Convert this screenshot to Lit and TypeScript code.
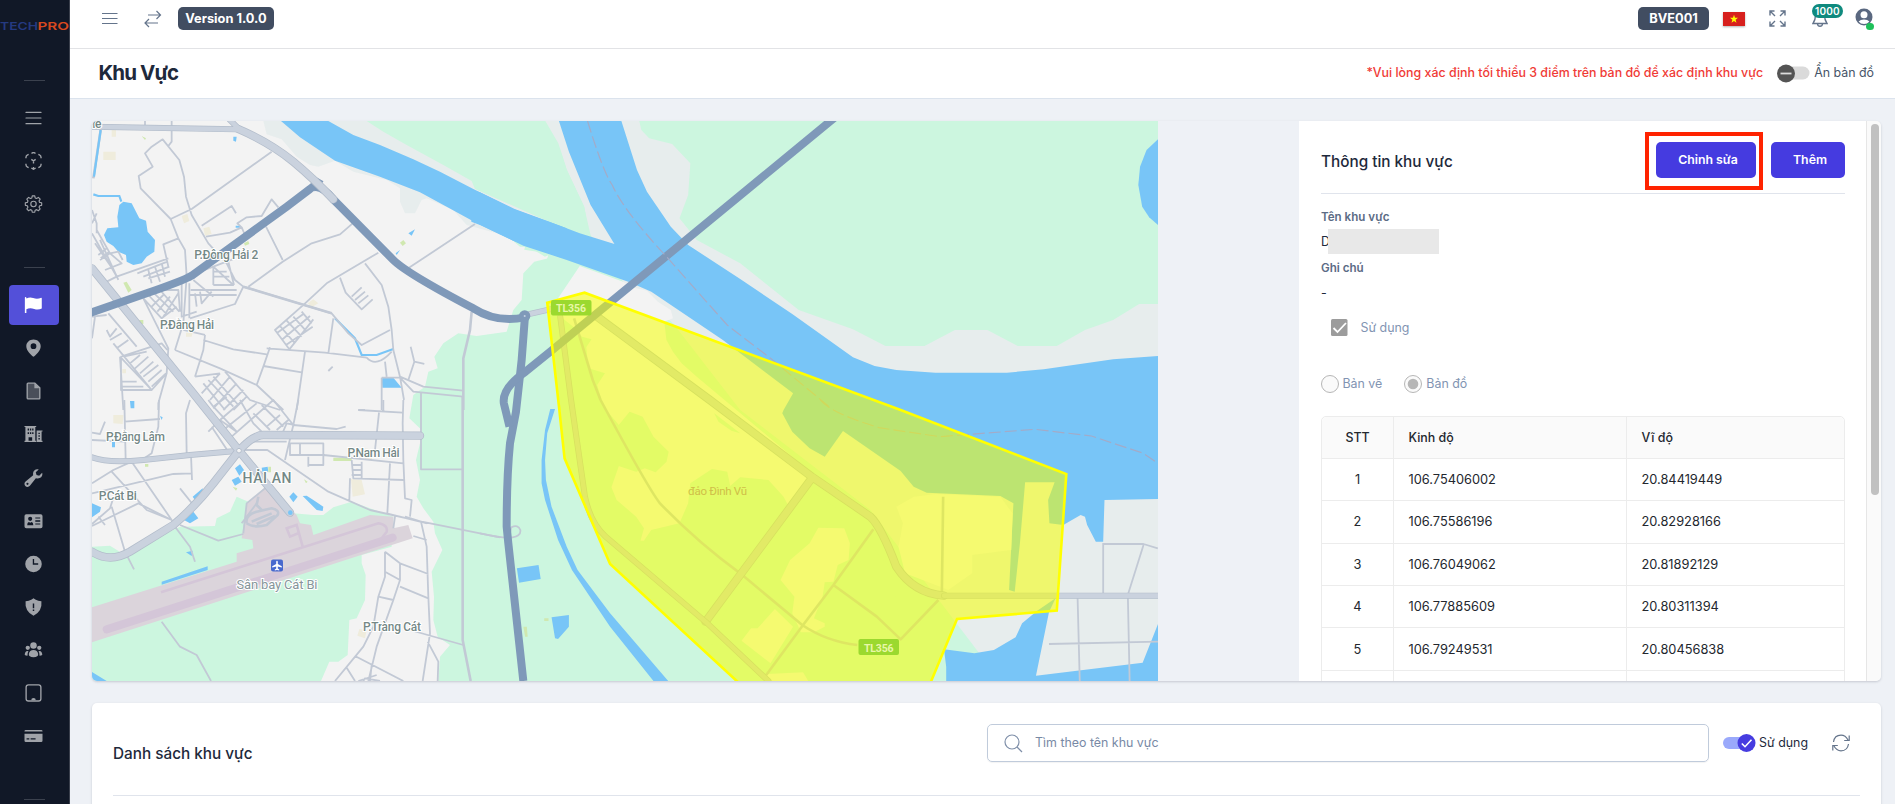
import { LitElement, html, svg, css } from "lit";
import { customElement } from "lit/decorators.js";

const points = [
  ["1", "106.75406002", "20.84419449"],
  ["2", "106.75586196", "20.82928166"],
  ["3", "106.76049062", "20.81892129"],
  ["4", "106.77885609", "20.80311394"],
  ["5", "106.79249531", "20.80456838"],
  ["", "", ""],
];

const line = (body: unknown, cls = "ico") =>
  html`<svg class=${cls} viewBox="0 0 24 24" fill="none" stroke="currentColor" stroke-width="1.6" stroke-linecap="round" stroke-linejoin="round">${body}</svg>`;
const solid = (body: unknown, box = "0 0 20 20") =>
  html`<svg class="ico" viewBox=${box} fill="currentColor">${body}</svg>`;

const menuLines = svg`<path d="M2 4.500h20M2 12h20M2 19.500h20"/>`;

const navTop = [
  line(menuLines),
  html`<svg class="ico" viewBox="0 0 20 20" fill="none" stroke="currentColor" stroke-width="1.500">
    <path d="M1.600 7V6Q1.600 4 3.400 3.200L4.600 2.600M15.400 2.600l1.200.6Q18.400 4 18.400 6v1M1.600 13v1Q1.600 16 3.400 16.800l1.200.6M15.400 17.400l1.200-.6Q18.400 16 18.400 14v-1M7.800 1.600Q10-.2 12.200 1.600M7.600 17.800L10 19.200l2.400-1.400M10 16.600v2.600M7.600 8.200L10 9.800l2.400-1.600M10 9.800v3"/></svg>`,
  html`<svg class="ico" viewBox="0 0 24 24" fill="none" stroke="currentColor" stroke-width="1.500" stroke-linejoin="round">
    <path d="M10.300 1.200h3.400l.5 2.700 2 .8 2.300-1.500 2.400 2.400-1.500 2.300.8 2 2.700.5v3.400l-2.700.5-.8 2 1.500 2.300-2.400 2.400-2.300-1.500-2 .8-.5 2.700h-3.400l-.5-2.700-2-.8-2.300 1.500-2.400-2.400 1.500-2.300-.8-2-2.700-.5v-3.400l2.700-.5.8-2L3.100 5.600l2.400-2.400 2.300 1.500 2-.8z"/><circle cx="12" cy="12" r="3.600"/></svg>`,
];

const navMain = [
  solid(svg`<path d="M1.200 1.200q.9 0 .9.900v.6Q6 .7 9.600 2.200 14 4 18.600 2q.6 0 .6.600v11.200q-3.800 2-8.400.6Q6 12.600 2.100 14.600V19H.4V2Q.4 1.200 1.200 1.200z"/>`),
  solid(svg`<path fill-rule="evenodd" d="M10 .5C5.600.500 2 3.700 2 8c0 5.200 5.800 10.200 8 11.700C12.200 18.200 18 13.200 18 8 18 3.700 14.400.500 10 .5zm0 10.700a3.200 3.200 0 110-6.400 3.200 3.200 0 010 6.400z"/>`),
  html`<svg class="ico" viewBox="0 0 20 20"><path d="M4 1.300h7.500L17 6.500V18q0 .8-.8.800H4q-1 0-1-1V2.300q0-1 1-1z" fill="#4a4f5a" stroke="currentColor" stroke-width="1.500"/><path d="M11 1v6h6z" fill="currentColor"/></svg>`,
  solid(svg`<path fill-rule="evenodd" d="M0 1h13v1.300h-1v15.200h1V19H0v-1.500h1V2.300H0zM3.500 4v2h1.500V4zM6 4v2h1.500V4zM8.500 4v2H10V4zM3.500 8v2h1.500V8zM6 8v2h1.500V8zM8.500 8v2H10V8zM4.500 13.500v4h4v-4zM13.500 6H20v1.300h-1v10.200h1V19h-6.500zM15.500 8.500v1.500H17V8.500zm0 3V13H17v-1.500zm0 3V16H17v-1.500z"/>`),
  solid(svg`<path fill-rule="evenodd" d="M19.600 4.300 16.300 7.600 13.400 6.700 12.500 3.700 15.800.500C12.800-.6 9.200 1.600 9.500 5.500L9.600 7 1.200 13.800C-.4 15.200-.4 17.400.9 18.800 2.300 20.300 4.700 20.200 6 18.700L12.600 10.400 14.300 10.500C18.300 10.800 20.700 7.400 19.600 4.300zM3.300 17.700a1.200 1.200 0 110-2.400 1.200 1.200 0 010 2.400z"/>`),
  solid(svg`<path fill-rule="evenodd" d="M2 2.500h16q2 0 2 2v11.500q0 2-2 2H2q-2 0-2-2V4.500q0-2 2-2zM6.300 5.300a2.300 2.300 0 100 4.600 2.300 2.300 0 000-4.600zM3 14.600h6.800Q9.800 11.500 8 11L6.400 12 4.800 11Q3 11.500 3 14.600zM12 6v1.300h5.500V6zm0 3.300v1.400h5.500V9.300zm0 3.400V14h5.500v-1.300z"/>`),
  solid(svg`<path fill-rule="evenodd" d="M10 .8a9.200 9.200 0 100 18.400A9.200 9.200 0 0010 .8zM9.200 4.500h1.500v4.800h4.500v1.500H9.200z"/>`),
  solid(svg`<path fill-rule="evenodd" d="M10 .4 12 1.800Q15 3.500 18.800 3.500 20 14.500 10 19.700 0 14.500 1.200 3.500 5 3.500 8 1.800zM9.200 6v5.300h1.600V6zm0 6.700v1.800h1.600v-1.800z"/>`),
  solid(svg`<circle cx="10" cy="5" r="3.600"/><circle cx="3.600" cy="7.600" r="2.400"/><circle cx="16.400" cy="7.600" r="2.400"/><path d="M4.800 14.500Q5.500 10 10 10t5.200 4.500Q15.500 18 10 18T4.800 14.500zM3.200 11Q.6 11.300.2 15.200 1 16.400 3.300 16.400 3 13.500 4.400 11.300zM16.800 11q2.600.3 3 4.200-.8 1.200-3.100 1.200.3-2.900-1.100-5.100z"/>`),
  html`<svg class="ico" viewBox="0 0 20 20"><rect x="1.800" y=".9" width="16.400" height="18" rx="2.600" fill="none" stroke="currentColor" stroke-width="1.500"/><path d="M7.500 18q0-2.500 2.500-2.500t2.500 2.500z" fill="currentColor"/></svg>`,
  solid(svg`<path d="M0 5V4.500q0-1.300 1.300-1.300h17.400q1.300 0 1.300 1.300V5z"/><path fill-rule="evenodd" d="M0 7.500h20v7.700q0 1.500-1.500 1.500h-17Q0 16.700 0 15.200zM2.300 12.500v1.300h3v-1.300zm4.500 0v1.300h5.500v-1.300z"/>`),
];

/* Map frames: W1/W2 cover the western half (3 units per pixel), E1/E2 the eastern half. */
const W1 = "translate(80 110) scale(.33333)";
const W2 = "translate(80 400) scale(.33333)";
const E1 = "translate(480 110) scale(.43367 .33333)";
const E2 = "translate(480 400) scale(.43367 .33333)";

const streetsW1 =
  "M195 33v12M275 33V95L265 108M272 327 182 235 176 198 218 170 195 130 215 110 248 88 298 150 312 200 318 260 335 315 385 400 440 460 465 510 490 530 590 560 755 610 805 670 845 705 930 660" +
  "M575 125 335 297 272 327 295 385 250 403 265 470M295 385 315 420 320 500 310 640 285 720M365 347 455 288 468 310M378 380 450 368 485 352 472 340 500 322 545 318 575 268 595 292M485 352 495 375" +
  "M558 350 608 450M505 530 608 455 695 400 780 373 818 340M1185 342 980 478M895 428 740 520 672 583M780 503 797 548 845 598 878 568M815 560 845 532M825 570 855 545M835 580 865 556M855 460 905 525 925 590 935 660 940 720 960 800 972 870" +
  "M672 583 585 660 628 718 700 628M600 648 645 700M620 632 665 680M640 620 680 665M665 605 695 640M590 670 670 612M605 690 690 618M618 705 698 650M760 625 745 730M370 690 460 718 560 733M375 675 370 720 345 800M285 720 420 775 530 825 610 900M310 660 375 675M570 712 550 770 530 825M560 715 735 728 860 743M675 725 650 900M550 768 665 787M860 743Q890 775 935 725M915 755 920 800M745 783 758 770M992 710 1003 755 1033 762M1003 755 985 810M905 803 905 900M960 800 1030 830 1150 842M905 803 960 803 1000 845 1150 860M1023 850V900" +
  "M36 300 50 340 50 370M36 370 110 500 80 515M45 400 100 480M60 390 115 510M50 360 90 430M60 450 90 430 125 460 75 480M36 340 50 310M55 435 80 415M62 445 88 425M90 430 115 425 128 450M110 500 265 445M172 490 262 455M190 500 268 470M205 505 270 485M205 480 215 520M225 470 240 515M245 460 255 500M190 565 245 625 290 590M205 555 262 615M220 548 280 605M240 540 298 605M215 590 250 555M232 605 270 560M250 620 295 550M245 540 295 540 300 605M120 740 215 840 260 790 265 715 190 565" +
  "M305 520V620L350 605M320 500 400 470 465 445M328 520V625M330 555H470M332 540H470M345 550 350 590M360 545 365 580 395 545M400 470 460 525M400 485H440M400 500H448M400 525H462M445 455 462 525M400 470V525M330 625 465 582 490 530M340 510 400 560M36 685 45 620M100 700 215 840M80 660 90 680 110 655M90 690 125 670M110 715 145 690M85 610 170 710M36 620 80 615M123 740V840H215M123 815H170M123 830H190M123 740 245 700 262 720M150 760 180 735M165 775 205 740M180 790 220 755M190 800 235 765M205 815 245 780M215 830 258 790M120 740 130 900M260 790 235 880 235 900M130 740 200 725M345 800 420 790M370 820 435 900M385 810 460 890M400 800 475 885M435 785 510 870 600 900M365 850 420 790M390 870 450 800M400 895 470 820M430 900 490 840M460 900 500 860M835 900H855";
const streetsW2 =
  "M36 98 60 102 75 65M36 120 135 125M133 0 137 180M133 65 240 57M237 0 235 80 215 160 185 180M330 0 318 40 320 160M333 165 336 240M36 250 100 210 155 185 275 360M95 215 200 330 275 360 175 310 36 378M36 280 280 222 335 220M95 320 135 455 162 508M36 372 90 325 98 300M55 350 75 375M300 265 340 315M385 0 400 20 470 95M400 20 440 -10M395 80 440 148M385 95 420 60 490 0M420 60 470 95M430 90 530 10M455 110 580 0 640 75M480 0 520 70 560 110 605 105 620 70 645 75M520 40 570 90M545 15 610 80M560 80 600 45M590 90 625 60M490 150H562L745 275 870 330 1025 365 1260 412M615 180 640 75 655 0M640 75 770 87 797 80M490 125H620M630 130H730V195H685V200M630 130V165H735M660 130V165M685 170V195M730 165 970 190M815 180 820 235 970 240M845 185V235M815 195H845M815 210H845M815 225H845M835 30 968 38M910 0V35M897 38 885 150M970 0 968 70 970 180 975 295 995 300 990 350M930 190 922 340M810 235 808 300M1023 0V208H1150M945 350 940 385M1023 365 1040 440 1045 590 1050 700 1028 843M920 340 1020 365M975 350 1040 370M1000 408 1040 420M915 455 960 490 1045 522M915 455 915 530 895 590 880 680 850 740 765 843M915 515 960 540 960 490M960 540 940 600 890 740 865 843M895 590 940 600M960 560 1045 595M825 768 970 843M800 803 825 843M990 690 1150 735M1043 725 1075 785 1073 843M835 843 890 825M850 843 855 835 900 843M875 795 870 843M245 665 300 740 350 765 393 843M285 380 330 440 345 485M300 375 415 422 490 402M530 310 485 370M555 265 500 310 490 400";
const streetsE = "M1435 432H1530L1563 445M1437 432V580M1530 435 1495 580M1378 595 1383 843M1494 595 1498 843M1312 732 1570 725M0 400Q50 415 75 412 95 408 93 390 88 372 72 382L70 395";

@customElement("area-map")
class AreaMap extends LitElement {
  static styles = css`
    :host { display: block; width: 1066px; height: 560px; }
    .map { display: block; width: 100%; height: 100%; }
    path, polyline { vector-effect: non-scaling-stroke; }
    .land { fill: #f3f3f3; }
    .marsh { fill: #e7eded; }
    .green { fill: #ccf6df; }
    .water { fill: #78c5f7; }
    .port { fill: #dbd4db; }
    .park { fill: #d0e8b0; }
    .block { fill: #efecdc; }
    .street { fill: none; stroke: #c2c9d5; stroke-width: 1.8; stroke-linejoin: round; }
    .lane { fill: none; stroke: #c2c9d5; stroke-width: 2.6; stroke-linejoin: round; }
    .casing { fill: none; stroke: #b3bdcb; stroke-width: 8.4; stroke-linecap: round; stroke-linejoin: round; }
    .road { fill: none; stroke: #cad2de; stroke-width: 6.8; stroke-linecap: round; stroke-linejoin: round; }
    .thin.casing { stroke-width: 6; }
    .thin.road { stroke-width: 4.6; }
    .highway { fill: none; stroke: #7f99b9; stroke-width: 8; stroke-linejoin: round; }
    .runway { fill: none; stroke: #d4c6d8; stroke-width: 8; stroke-linecap: round; }
    .taxi { fill: none; stroke: #d4c6d8; stroke-width: 2.6; }
    .creek { fill: none; stroke: #78c5f7; stroke-width: 2.2; }
    .ferry { fill: none; stroke: #a3abc8; stroke-width: 1.2; stroke-dasharray: 12 4; }
    .zone { fill: #f6ff00; fill-opacity: .54; stroke: #ffff00; stroke-width: 2.6; }
    text { font-family: Roboto, sans-serif; font-size: 12px; font-weight: 500; fill: #748886; stroke: #fff; stroke-width: 2px; paint-order: stroke; }
    .district { font-size: 14px; letter-spacing: 1px; }
    .poi { font-size: 13px; font-weight: 400; fill: #86959a; }
    .isle { fill: #d0bf48; stroke: none; font-weight: 400; font-size: 11.5px; }
    .tag { fill: #e9f7a8; stroke: none; font-size: 10.5px; font-weight: 700; }
  `;
  render() {
    return html`<svg class="map" viewBox="92 121 1066 560" preserveAspectRatio="none">
      <rect class="land" x="92" y="121" width="1066" height="560"/>
      <g transform=${E1}>
        <path class="green" d="M184 33H1570V1713H0V900Z"/>
        <path class="land" d="M-60 340 0 372 60 390 95 418 155 430 158 445 125 455 103 495 97 570 80 620 60 670 0 678-60 672Z"/>
        <path class="marsh" d="M100 20H365L372 60 390 85 443 102 485 160 480 255 460 325 500 390 600 460 735 600 860 658 935 708H1025L1095 660H1170L1240 708H1330L1395 660 1460 630 1520 582H1570V1713H1200L900 1200 600 900 445 640 330 515 255 375 240 290 200 180 180 100Z"/>
      </g>
      <g transform=${W1}>
        <path class="marsh" d="M550 33 560 73 605 88 650 140 690 165 715 170 765 152 820 185 920 210 960 235V275L975 310H1005L1025 270 1040 265 1120 300 1160 345 1250 370 1300 392 1440 442V33Z"/>
        <path class="green" d="M860 33 910 65 980 105 1090 165 1175 213 1185 237 1440 350 1532 410 1513 290 1461 180 1435 100 1396 33Z"/>
        <path class="green" d="M1440 440 1290 385 1320 410 1345 410 1395 440 1405 435 1400 450 1360 458 1330 490 1325 570 1300 600 1280 665 1190 678 1135 670 1090 700 1063 740 1073 775 1045 785 1035 830 1000 855 988 925 1025 960 1020 1000 1008 1050 1020 1110 1010 1160 1030 1195 1060 1235 1065 1270 1087 1320 1055 1385 1062 1460 1060 1530 1073 1580 1110 1605 1080 1640 1075 1713H1440Z"/>
      </g>
      <g transform=${W2}>
        <path class="green" d="M36 440 90 437 130 462 300 380 405 378 410 355 450 335 470 290 505 305 560 270 640 340 700 345 730 345 760 322 815 305 870 325 940 350 935 440 845 465V490L857 525 855 600 830 655 808 660 803 765 775 785H748L723 843H36Z"/>
        <path class="port" d="M36 622 470 485V460L520 445 517 420 485 415 490 380 500 310 555 262 590 290 650 345 660 370 693 375 700 405 870 345 940 350V385L985 375 998 415 36 727Z"/>
        <path class="runway" d="M80 688 938 413"/>
        <path class="taxi" d="M243 577 895 370Q925 375 920 395L905 415 850 440M668 440 650 375 620 385 630 410 655 400"/>
        <path class="water" d="M245 545 383 499V510L245 554ZM318 457 338 452 335 468ZM465 205 480 193 492 210 478 227ZM455 240 475 230 485 245 465 257ZM338 290 368 265 370 290 345 300ZM312 360 340 335 355 355 330 370ZM36 310 63 322 60 335 36 352ZM628 290 640 277 653 290 640 307ZM668 288 680 287 700 300 730 320 728 333 710 330ZM545 203 563 200 565 215H547ZM96 122H105V142H96ZM150 3H163V25H152ZM240 48 248 52 245 60ZM36 816 80 843H36Z"/>
        <path class="block" d="M100 45 130 45 128 72 100 70ZM813 237 845 240 855 283 818 290ZM855 145 880 150 875 182 855 178ZM838 687 860 690 855 715 832 707Z"/>
        <path class="park" d="M760 173H815V183H760ZM195 192H205V200H195ZM458 260 472 265 468 272ZM565 200H573V217H565ZM672 238 683 245 678 250Z"/>
      </g>
      <g transform=${W1}>
        <path class="water" d="M603 33 660 82 765 152 900 200 1020 247 1100 290 1185 337 1300 392 1440 442H1460V355L1440 347 1300 297 1180 237 1080 185 1000 148 900 105 820 75 745 33Z"/>
        <path class="water" d="M118 285 130 275 155 280 178 325 198 332 203 365 225 390 223 425 200 440 185 460 160 465 140 455 138 435 115 425 100 408 80 395 72 375 82 355 115 352 112 320Z"/>
        <path class="creek" d="M40 253 55 258H118L124 275M765 625 825 685 845 735H890L940 717"/>
        <path class="water" d="M460 80 470 80 468 95 460 92ZM905 803H940L965 833H907ZM985 370 1005 358 995 377ZM947 430 960 420 950 435ZM467 347H480V353H467Z"/>
        <path class="block" d="M70 125H107V150H70ZM95 60H108V80H95ZM305 318 322 312 328 333 312 340ZM370 355 388 350 395 372 375 377ZM683 580 700 568 715 580 695 592ZM318 668 338 668 335 680H318ZM127 777H138V790H127Z"/>
        <path class="park" d="M185 78 198 85 195 90ZM130 518 140 515 155 540 145 548ZM492 400 505 393 508 402 495 407ZM960 398 970 390 978 400 968 408ZM178 630H190V642H178Z"/>
      </g>
      <g transform=${E1}>
        <path class="water" d="M182 33 205 125 255 285 310 402 230 370 160 335 80 297 0 247-20 240V335L0 345 100 407 200 450 345 517 395 545 560 690 585 715 722 850 700 900 697 910 720 965 760 1015 795 1040 837 963 970 1083 1000 1130 1030 1148 1200 1158 1230 1180 1220 1440 1233 1445 1245 1300 1257 1117H1325L1310 1170 1313 1240 1345 1245 1385 1215 1395 1220 1400 1245 1420 1295 1437 1295 1440 1170 1570 1167V737L1460 748 1300 778 1215 788H1050L960 780 910 768 860 742 720 612 600 507 480 405 440 350 385 245 362 180 326 33Z"/>
        <path class="water" d="M1570 80 1537 120 1522 170 1518 225 1527 290 1543 322 1570 352Z"/>
        <path class="land" d="M180 565 230 468 330 515 360 535 385 542 410 575 440 600 445 625 425 635 430 690 445 725 465 760 500 800 720 1040 760 1110 710 1185 700 1160 665 1110 600 1102 577 1128 570 1085 535 1077 485 1120 480 1180 460 1240 395 1260 378 1292H370L378 1255 360 1220 315 1170 303 1132 320 1068 360 1085 380 1075 405 1087 430 1055 435 1025 400 980 375 920 345 905 320 945 285 890 270 825 288 790 250 775 245 712 257 688 235 680 215 650 190 625Z"/>
      </g>
      <g transform=${E2}>
        <path class="green" d="M710 315 760 270 850 350 890 420 945 500 965 640 968 700 935 770 920 843H500L590 560 660 380ZM540 40 600 100 580 92 550 65Z"/>
        <path class="land" d="M780 383 840 385 853 430 850 480 825 495 815 545 795 547 790 590 770 655 795 670V680L770 697H740L720 640 725 590 693 540 715 480 760 430ZM680 627 722 680 670 790 603 722 625 685H640ZM660 822 745 817 757 843H660ZM960 320 1000 290 1050 282 1200 290 1228 340 1225 450 1135 465V520L1080 570 980 520 965 440 975 370Z"/>
        <path class="water" d="M162 27H173L155 100 150 180 152 240 165 320 200 440 225 510 300 640 434 843H400L300 680 212 510 180 420 150 300 142 250V180L150 90ZM85 505 135 495 140 537 90 548ZM165 652 205 645V680L180 717 173 715Z"/>
        <path class="water" d="M1327 595 1285 632 1250 670 1235 712 1185 750 1140 760 1070 748 1075 800V843H1570V650L1528 788 1282 827 1312 637Z"/>
        <path class="park" d="M100 680H108L110 710H104ZM148 655H158V663H148Z"/>
        <path class="street" d=${streetsE}/>
        <path class="lane" d="M1068 290 1065 580M278 0Q390 270 415 310 500 425 600 520L743 675Q800 725 870 735M660 825 745 675 815 555 907 388M815 555 915 650 970 718 1057 600"/>
        <path class="lane" d="M217-245 260-60 278 0"/>
        <path class="casing" d="M270-250 530 0 765 230 900 350Q925 380 960 500 1000 580 1070 587M765 235 520 665"/>
        <path class="road" d="M270-250 530 0 765 230 900 350Q925 380 960 500 1000 580 1070 587M765 235 520 665"/>
        <path class="thin casing" d="M185-250 210 0 242 290Q255 370 290 410L520 665 665 843M1070 587H1585"/>
        <path class="thin road" d="M185-250 210 0 242 290Q255 370 290 410L520 665 665 843M1070 587H1585"/>
        <path class="ferry" d="M785 0Q810 40 920 83L1060 110 1280 88 1410 108 1530 160 1563 190"/>
      </g>
      <g transform=${W1}>
        <path class="street" d=${streetsW1}/>
        <path class="lane" d="M62 60 40 205M1175 605 1170 660 1150 745V900M490 530 590 560 755 610"/>
        <path class="creek" d="M62 60 42 200"/>
      </g>
      <g transform=${W2}>
        <path class="street" d=${streetsW2}/>
        <path class="lane" d="M1148-10V720L1172 843M500 370Q495 345 530 335L575 325Q600 330 593 345L560 375Q520 385 500 370M515 365 575 340M530 372 585 348M535 290 530 315 545 330"/>
        <path class="thin casing" d="M36 172Q80 190 190 180L330 165 477 152"/>
        <path class="thin road" d="M36 172Q80 190 190 180L330 165 477 152"/>
        <path class="casing" d="M36-395 340-20 477 152 630 338M477 152Q520 105 550 105L1020 107M477 152 400 250Q340 325 280 375L150 455Q90 490 36 455"/>
        <path class="road" d="M36-395 340-20 477 152 630 338M477 152Q520 105 550 105L1020 107M477 152 400 250Q340 325 280 375L150 455Q90 490 36 455"/>
        <circle cx="477" cy="152" r="7" fill="#f3f3f3" stroke="#b3bdcb" stroke-width="3"/>
        <circle cx="631" cy="338" r="7" fill="#78c5f7"/>
      </g>
      <g transform=${W1}>
        <path class="highway" d="M20 612 200 550Q310 512 335 497L620 290 690 237Q712 222 720 208M700 232Q725 225 760 268L940 450Q980 490 1180 595 1250 640 1335 622"/>
        <path class="thin casing" d="M30 50 470 58M445 25 475 55"/>
        <path class="casing" d="M475 57Q570 98 640 155 700 205 760 268"/>
        <path class="thin road" d="M30 50 470 58M445 25 475 55"/>
        <path class="road" d="M475 57Q570 98 640 155 700 205 760 268"/>
        <path class="thin casing" d="M1340 614 1410 598"/>
        <path class="thin road" d="M1340 614 1410 598"/>
        <path class="highway" d="M1335 618 1325 750 1308 905 1290 1000Q1280 1100 1280 1250L1285 1300 1330 1713"/>
        <circle cx="1334" cy="618" r="17" fill="#7f99b9"/><circle cx="1334" cy="618" r="3" fill="#c2d0e2"/>
      </g>
      <g transform=${E1}>
        <path class="highway" d="M825 15 165 722 105 785Q50 835 55 880L68 950"/>
        <path class="ferry" d="M248 33Q285 190 305 225 330 300 430 440L570 645 670 745 805 890"/>
        <path class="zone" d="M155 578 241 548 970 900 1352 1092 1330 1502 1100 1527 1035 1730H605L592 1713 300 1362 195 1045 183 900Z"/>
      </g>
      <rect x="551" y="300" width="40.500" height="15.500" rx="2" fill="#9bd92f"/>
      <rect x="858.500" y="639" width="40.500" height="16" rx="2" fill="#9bd92f"/>
      <text class="tag" x="556" y="312" textLength="30">TL356</text>
      <text class="tag" x="864" y="651.500" textLength="29.500">TL356</text>
      <text class="isle" x="688" y="495" textLength="59">đảo Đình Vũ</text>
      <text x="92.500" y="128" textLength="9">re</text>
      <text x="194.300" y="258.700" textLength="64">P.Đông Hải 2</text>
      <text x="160" y="329" textLength="54">P.Đằng Hải</text>
      <text x="106" y="441" textLength="59">P.Đằng Lâm</text>
      <text x="98.700" y="500" textLength="38">P.Cát Bi</text>
      <text x="347.500" y="457" textLength="52">P.Nam Hải</text>
      <text class="district" x="242.500" y="483" textLength="50">HẢI AN</text>
      <text class="poi" x="236.500" y="589" textLength="81">Sân bay Cát Bi</text>
      <text x="363" y="631" textLength="58">P.Tràng Cát</text>
      <rect x="271" y="559.500" width="12" height="12" rx="2" fill="#4869ce"/>
      <path d="M277 560.800q.8 0 .8 1.200v2l4 2.200v1.200l-4-1v2.200l1.400 1v.9l-2.200-.5-2.200.5v-.9l1.400-1v-2.200l-4 1v-1.200l4-2.200v-2q0-1.200.8-1.200z" fill="#fff"/>
    </svg>`;
  }
}

@customElement("app-root")
class AppRoot extends LitElement {
  static styles = css`
    :host { display: flex; width: 100vw; height: 804px; overflow: hidden; background: #eef1f6; color: #1e293b; font: 400 12.4px/20px Inter, sans-serif; }
    * { box-sizing: border-box; }
    .ico { display: block; width: 19px; height: 18px; margin-right: 1.5px; }
    .side { width: 70px; flex: none; background: #111827; border-right: 1px solid #3a3f4c; display: flex; flex-direction: column; align-items: center; color: #a0a3a9; overflow: hidden; }
    .logo { width: 70px; height: 80px; flex: none; }
    .rule { width: 21px; height: 1px; flex: none; background: #3b414e; }
    .nav { display: flex; flex-direction: column; gap: 3.15px; width: 50px; flex: none; margin-right: 1px; }
    .nav-tools { padding: 17px 0 42.7px; }
    .nav-main { padding: 17px 0 42.5px; }
    .item { height: 40px; flex: none; border-radius: 4px; display: flex; align-items: center; justify-content: center; }
    .item.on { background: #5350d9; color: #fff; }
    .page { flex: 1; min-width: 0; display: flex; flex-direction: column; }
    .topbar { height: 49px; flex: none; background: #fff; border-bottom: 1px solid #e2e3e6; display: flex; align-items: flex-start; padding: 7px 22px 0 32px; color: #64748b; }
    .cell { height: 23px; display: flex; align-items: center; position: relative; }
    .cell.user { height: 19px; }
    .burger { width: 16px; height: 15px; }
    .chip { height: 23px; border-radius: 5px; background: #414d61; color: #fff; font-weight: 700; font-size: 12.8px; display: flex; align-items: center; justify-content: center; }
    .grow { flex: 1; }
    .badge { position: absolute; left: 0; top: -3px; width: 31px; height: 14px; border-radius: 7px; background: #0f8a7e; color: #fff; font-size: 10px; line-height: 14px; font-weight: 600; text-align: center; letter-spacing: .2px; }
    .dot { position: absolute; left: 11px; top: 15.5px; width: 7.5px; height: 7.5px; border-radius: 50%; background: #1fc05a; }
    .flag { box-shadow: 0 1px 2px rgba(0,0,0,.3); display: block; }
    .head { height: 50px; flex: none; background: #fff; border-bottom: 1px solid #dbe3ed; display: flex; align-items: center; padding: 0 21px 2px 28.5px; }
    h1 { margin: 0; font-size: 20.5px; line-height: 30px; font-weight: 700; letter-spacing: -.9px; flex: 1; }
    .warn { color: #f03b36; font-weight: 500; margin-right: 14px; white-space: nowrap; }
    .head-label { color: #475569; font-size: 12.4px; margin-left: 4px; white-space: nowrap; }
    .body { padding: 22px 14px 0 22px; display: flex; flex-direction: column; gap: 22px; }
    .card { border-radius: 5px; box-shadow: 0 1px 2.5px rgba(15,23,42,.18); overflow: hidden; flex: none; }
    .area { height: 560px; display: flex; }
    .void { flex: 1; }
    .info { width: 567px; background: #fff; padding: 0 21px 0 22px; }
    .bar { width: 15px; background: #fafafa; border-left: 1px solid #e6e6e6; padding: 3px 3px 0 4px; }
    .thumb { height: 371px; width: 8px; border-radius: 4px; background: #c1c1c1; }
    .info-head { height: 73px; display: flex; align-items: flex-start; border-bottom: 1px solid #e0e4ec; }
    h2 { margin: 0; font-weight: 500; font-size: 15.3px; line-height: 24px; }
    .info-head h2 { flex: 1; margin-top: 29px; }
    .focus { width: 118px; height: 58px; border: 4px solid #ff2300; margin: 11px 8px 0 0; padding: 6px 0 0 7px; }
    .btn { height: 36px; border-radius: 5px; background: #453be0; color: #fff; font-weight: 600; font-size: 12.3px; line-height: 35px; text-align: center; padding-left: 4px; }
    .edit { width: 100px; }
    .add { width: 74px; margin-top: 21px; }
    .lbl { color: #5b6b85; font-weight: 600; font-size: 11.6px; line-height: 18px; }
    .name { height: 25px; display: flex; align-items: center; }
    .mask { width: 111px; height: 25px; background: #e8e8e8; margin-left: -2px; }
    .opt { color: #8294b2; display: flex; align-items: center; }
    .opt svg { display: block; flex: none; }
    .table { margin-top: 22px; border: 1px solid #ececec; border-radius: 5px 5px 0 0; color: #23272e; }
    .row { display: grid; grid-template-columns: 71px 233px 1fr; height: 42.4px; border-bottom: 1px solid #ececec; font-size: 12.8px; }
    .row > div { padding: 1px 0 0 14.5px; display: flex; align-items: center; }
    .row > div:first-child { padding: 1px 0 0; justify-content: center; }
    .row > div + div { border-left: 1px solid #ececec; }
    .row.th { background: #fafafa; font-weight: 500; font-size: 12.4px; border-radius: 5px 5px 0 0; }
    .list { height: 130px; background: #fff; padding: 21px 21px 0; }
    .list-head { height: 72px; border-bottom: 1px solid #e0e4ec; display: flex; align-items: flex-start; }
    .list-head h2 { flex: 1; margin-top: 18px; }
    .search { width: 722px; height: 38px; border: 1px solid #c0cbdb; border-radius: 5px; box-shadow: 0 1px 1px rgba(0,0,0,.05); display: flex; align-items: center; padding-left: 16px; gap: 12px; color: #7889a5; }
    .tools { height: 37px; display: flex; align-items: center; margin: 0 10px 0 14px; color: #1e293b; }
  `;
  render() {
    return html`
      <nav class="side">
        <svg class="logo" viewBox="0 0 70 80" font-family="Inter, sans-serif" font-weight="600" font-size="11">
          <text x="0" y="30" fill="#253a80" textLength="38" lengthAdjust="spacingAndGlyphs">TECH</text>
          <text x="37.500" y="30" fill="#d9491f" textLength="31.500" lengthAdjust="spacingAndGlyphs">PRO</text>
        </svg>
        <div class="rule"></div>
        <div class="nav nav-tools">${navTop.map((i) => html`<div class="item">${i}</div>`)}</div>
        <div class="rule"></div>
        <div class="nav nav-main">${navMain.map((i, n) => html`<div class="item ${n ? "" : "on"}">${i}</div>`)}</div>
        <div class="rule"></div>
      </nav>
      <div class="page">
        <header class="topbar">
          <div class="cell"><svg class="burger" viewBox="0 0 16 15" stroke="currentColor" stroke-width="1.200"><path d="M0 2.500h15.500M0 7.500h15.500M0 12.500h15.500"/></svg></div>
          <div class="cell" style="margin:0 16px 0 26px"><svg width="18" height="18" viewBox="0 0 18 18" fill="none" stroke="currentColor" stroke-width="1.200"><path d="M4 5h12.500M12.500 1l4 4-4 4M14 13H1M5 9l-4 4 4 4"/></svg></div>
          <div class="chip" style="width:96px">Version 1.0.0</div>
          <div class="grow"></div>
          <div class="chip" style="width:71px;margin-right:14px">BVE001</div>
          <div class="cell" style="margin-right:24px"><svg class="flag" width="22" height="14" viewBox="0 0 22 14"><rect width="22" height="14" fill="#d7201d"/><path d="M11 2.800l1 3h3l-2.400 1.900.9 3L11 8.900l-2.500 1.800.9-3L7 5.800h3z" fill="#ff0"/></svg></div>
          <div class="cell" style="margin-right:26px"><svg width="17" height="17" viewBox="0 0 17 17" fill="none" stroke="currentColor" stroke-width="1.400"><path d="M1 5.500V1h4.500M1 1l5 5M16 5.500V1h-4.500M16 1l-5 5M1 11.500V16h4.500M1 16l5-5M16 11.500V16h-4.500M16 16l-5-5"/></svg></div>
          <div class="cell" style="margin-right:27px"><svg width="16" height="17" viewBox="0 0 16 17" fill="none" stroke="currentColor" stroke-width="1.400"><path d="M3.500 5Q3.500 10 1 13.500h14Q12.500 10 12.500 5M5.500 14q.3 2.300 2.500 2.300T10.500 14"/></svg><span class="badge">1000</span></div>
          <div class="cell user"><svg width="18" height="18" viewBox="0 0 18 18"><circle cx="9" cy="9" r="8.500" fill="#5a6880"/><circle cx="9" cy="6.700" r="3.500" fill="#fff"/><path d="M3.600 13.500Q5.500 11.400 9 11.400t5.400 2.100Q12.400 16 9 16t-5.400-2.500z" fill="#fff"/></svg><span class="dot"></span></div>
        </header>
        <div class="head">
          <h1>Khu Vực</h1>
          <span class="warn">*Vui lòng xác định tối thiểu 3 điểm trên bản đồ để xác định khu vực</span>
          <svg width="33" height="20" viewBox="0 0 33 20"><rect x="4" y="3.500" width="28.500" height="13" rx="6.500" fill="#dadada"/><circle cx="9" cy="10.500" r="9" fill="#545454"/><path d="M3.500 10.500h11" stroke="#dcdcdc" stroke-width="1.800"/></svg>
          <span class="head-label">Ẩn bản đồ</span>
        </div>
        <main class="body">
          <section class="card area">
            <area-map></area-map>
            <div class="void"></div>
            <div class="info">
              <div class="info-head">
                <h2>Thông tin khu vực</h2>
                <div class="focus"><div class="btn edit">Chỉnh sửa</div></div>
                <div class="btn add">Thêm</div>
              </div>
              <div class="lbl" style="padding-top:14px">Tên khu vực</div>
              <div class="name" style="margin-top:3px">D<span class="mask"></span></div>
              <div class="lbl" style="padding-top:5px">Ghi chú</div>
              <div style="margin-top:6px">-</div>
              <div class="opt" style="padding:14.500px 0 0 10px"><svg width="17" height="17" viewBox="0 0 17 17"><rect width="16.500" height="17" rx="1.500" fill="#9c9c9c"/><path d="M2.500 9l4 4 8.500-9" fill="none" stroke="#fff" stroke-width="1.800"/></svg><span style="margin-left:12.500px">Sử dụng</span></div>
              <div class="opt" style="padding-top:36px">
                <svg width="18" height="18"><circle cx="9" cy="9" r="8.500" fill="#fafafa" stroke="#b6b6b6"/></svg><span style="margin:0 22px 0 3.500px">Bản vẽ</span>
                <svg width="18" height="18"><circle cx="9" cy="9" r="8.500" fill="#fafafa" stroke="#b6b6b6"/><circle cx="9" cy="9" r="5.300" fill="#b6b6b6"/></svg><span style="margin-left:4px">Bản đồ</span>
              </div>
              <div class="table">
                <div class="row th"><div>STT</div><div>Kinh độ</div><div>Vĩ độ</div></div>
                ${points.map((p) => html`<div class="row">${p.map((c) => html`<div>${c}</div>`)}</div>`)}
              </div>
            </div>
            <div class="bar"><div class="thumb"></div></div>
          </section>
          <section class="card list">
            <div class="list-head">
              <h2>Danh sách khu vực</h2>
              <div class="search"><svg width="19" height="19" viewBox="0 0 19 19" fill="none" stroke="#7f8fa9" stroke-width="1.200"><circle cx="8" cy="8" r="7"/><path d="M13 13l5 5"/></svg>Tìm theo tên khu vực</div>
              <div class="tools">
                <svg width="33" height="20" viewBox="0 0 33 20"><rect x="0" y="4" width="30" height="12" rx="6" fill="#9aa9fb"/><circle cx="23.500" cy="10" r="9" fill="#463ce0"/><path d="M18.800 10.500l3.200 3.200 6.500-7" fill="none" stroke="#fff" stroke-width="1.600"/></svg>
                <span style="margin:0 24px 0 3px">Sử dụng</span>
                <svg width="18" height="18" viewBox="0 0 18 18" fill="none" stroke="#64748b" stroke-width="1.200"><path d="M1.500 8Q2.500 1.200 9 1.200q4.500 0 7 4.800M17.200 1.500V6.500h-5M16.500 10Q15.500 16.800 9 16.800q-4.500 0-7-4.800M.8 16.500v-5h5"/></svg>
              </div>
            </div>
          </section>
        </main>
      </div>`;
  }
}
